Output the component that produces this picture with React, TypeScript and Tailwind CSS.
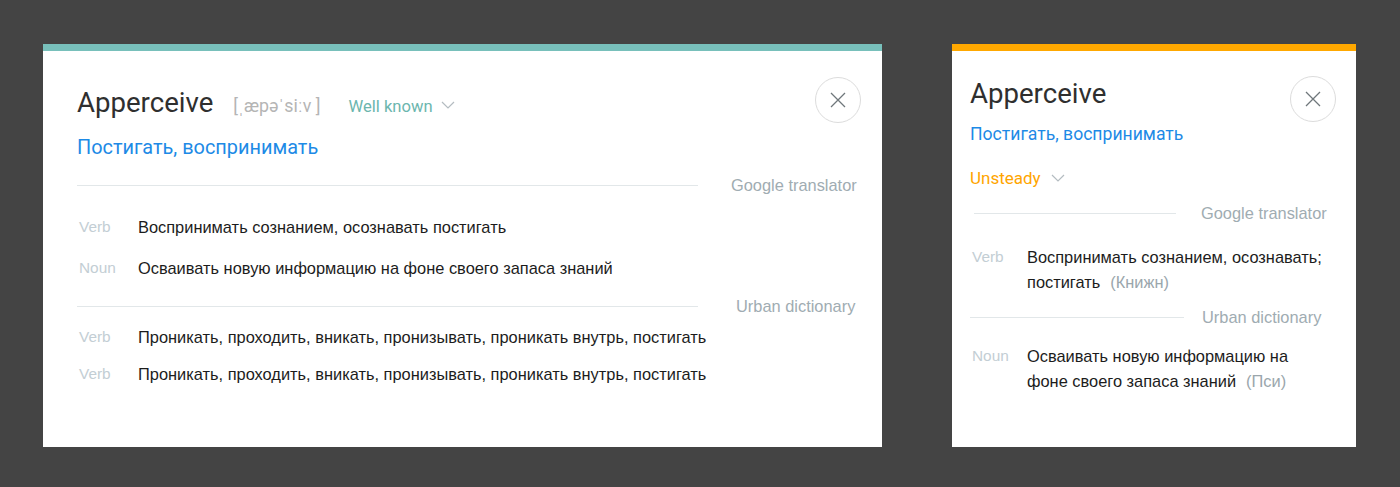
import React from "react";

const body = { fontFamily: '"Liberation Sans", Arial, sans-serif' };
const head = { fontFamily: 'Roboto, "Liberation Sans", sans-serif' };

function Chevron({ className }: { className?: string }) {
    return (
        <svg width="14" height="8" viewBox="0 0 14 8" fill="none" className={className}>
            <path d="M1 1l6 6 6-6" stroke="#b4bcc1" strokeWidth="1.2" />
        </svg>
    );
}

function CloseButton() {
    return (
        <button className="flex h-[46px] w-[46px] shrink-0 items-center justify-center rounded-full border border-[#dcdcdc] bg-white">
            <svg width="16" height="16" viewBox="0 0 16 16" fill="none">
                <path d="M1 1l14 14M15 1L1 15" stroke="#6f777b" strokeWidth="1.3" />
            </svg>
        </button>
    );
}

interface SourceProps {
    label: string;
    line: string;
    gap: string;
}

function Source({ label, line, gap }: Readonly<SourceProps>): React.ReactElement {
    return (
        <div className="flex items-center">
            <div className={`h-px bg-[#e2e7e9] ${line}`} />
            <span className={`text-[16.4px] leading-[20px] text-[#a0acb2] ${gap}`} style={body}>
                {label}
            </span>
        </div>
    );
}

interface RowProps {
    pos: string;
    text: string;
    note?: string;
    labelW: string;
    textW?: string;
}

function Row({ pos, text, note, labelW, textW }: Readonly<RowProps>): React.ReactElement {
    return (
        <div className="flex items-start" style={body}>
            <span className={`shrink-0 pl-[2px] text-[15.4px] leading-[24px] text-[#c3ced4] ${labelW}`}>{pos}</span>
            <p className={`text-[16.4px] leading-[25px] text-[#1c1c1c] ${textW ?? ""}`}>
                {text}
                {note && <span className="ml-[10px] text-[#9aa6ac]">{note}</span>}
            </p>
        </div>
    );
}

function WideCard() {
    return (
        <div className="flex h-[403px] w-[839px] shrink-0 flex-col bg-white">
            <div className="h-[7px] bg-[#78c0bb]" />
            <div className="pl-[34px] pr-[21px] pt-[26px]">
                <div className="flex justify-between">
                    <div className="flex items-baseline pt-[10px]" style={head}>
                        <span className="text-[27.6px] leading-[32px] text-[#2f2f2f]">Apperceive</span>
                        <span className="ml-[20px] text-[17.8px] text-[#b5b5b5]">[ˌæpəˈsiːv ]</span>
                        <span className="ml-[28px] text-[16.6px] text-[#6cb6ae]">Well known</span>
                        <Chevron className="ml-[8px] -translate-y-[3px]" />
                    </div>
                    <CloseButton />
                </div>
                <div className="mt-[13px] text-[19.9px] leading-[24px] text-[#1d8ae6]" style={head}>
                    Постигать, воспринимать
                </div>
                <div className="mt-[15px]">
                    <Source label="Google translator" line="w-[621px]" gap="ml-[33px]" />
                </div>
                <div className="mt-[20px] flex flex-col gap-[16px]">
                    <Row pos="Verb" text="Воспринимать сознанием, осознавать постигать" labelW="w-[61px]" />
                    <Row pos="Noun" text="Осваивать новую информацию на фоне своего запаса знаний" labelW="w-[61px]" />
                </div>
                <div className="mt-[15px]">
                    <Source label="Urban dictionary" line="w-[621px]" gap="ml-[38px]" />
                </div>
                <div className="mt-[9px] flex flex-col gap-[12px]">
                    <Row pos="Verb" text="Проникать, проходить, вникать, пронизывать, проникать внутрь, постигать" labelW="w-[61px]" />
                    <Row pos="Verb" text="Проникать, проходить, вникать, пронизывать, проникать внутрь, постигать" labelW="w-[61px]" />
                </div>
            </div>
        </div>
    );
}

function NarrowCard() {
    return (
        <div className="flex h-[403px] w-[404px] shrink-0 flex-col bg-white">
            <div className="h-[7px] bg-[#ffa800]" />
            <div className="pl-[18px] pr-[20px] pt-[25px]">
                <div className="flex justify-between">
                    <span className="pt-[2px] text-[27.6px] leading-[32px] text-[#2f2f2f]" style={head}>
                        Apperceive
                    </span>
                    <CloseButton />
                </div>
                <div className="mt-[1px] text-[17.6px] leading-[22px] text-[#1d8ae6]" style={head}>
                    Постигать, воспринимать
                </div>
                <div className="mt-[22px] flex items-center" style={head}>
                    <span className="text-[17px] leading-[22px] text-[#ffa500]">Unsteady</span>
                    <Chevron className="ml-[10px]" />
                </div>
                <div className="mt-[14px] pl-[4px]">
                    <Source label="Google translator" line="w-[202px]" gap="ml-[25px]" />
                </div>
                <div className="mt-[22px]">
                    <Row
                        pos="Verb"
                        text="Воспринимать сознанием, осознавать; постигать"
                        note="(Книжн)"
                        labelW="w-[57px]"
                        textW="w-[306px]"
                    />
                </div>
                <div className="mt-[12px]">
                    <Source label="Urban dictionary" line="w-[214px]" gap="ml-[18px]" />
                </div>
                <div className="mt-[17px]">
                    <Row
                        pos="Noun"
                        text="Осваивать новую информацию на фоне своего запаса знаний"
                        note="(Пси)"
                        labelW="w-[57px]"
                        textW="w-[306px]"
                    />
                </div>
            </div>
        </div>
    );
}

export default function App(): React.ReactElement {
    return (
        <div className="flex h-[487px] w-[1400px] items-start gap-[70px] bg-[#444444] pl-[43px] pt-[44px]">
            <WideCard />
            <NarrowCard />
        </div>
    );
}
